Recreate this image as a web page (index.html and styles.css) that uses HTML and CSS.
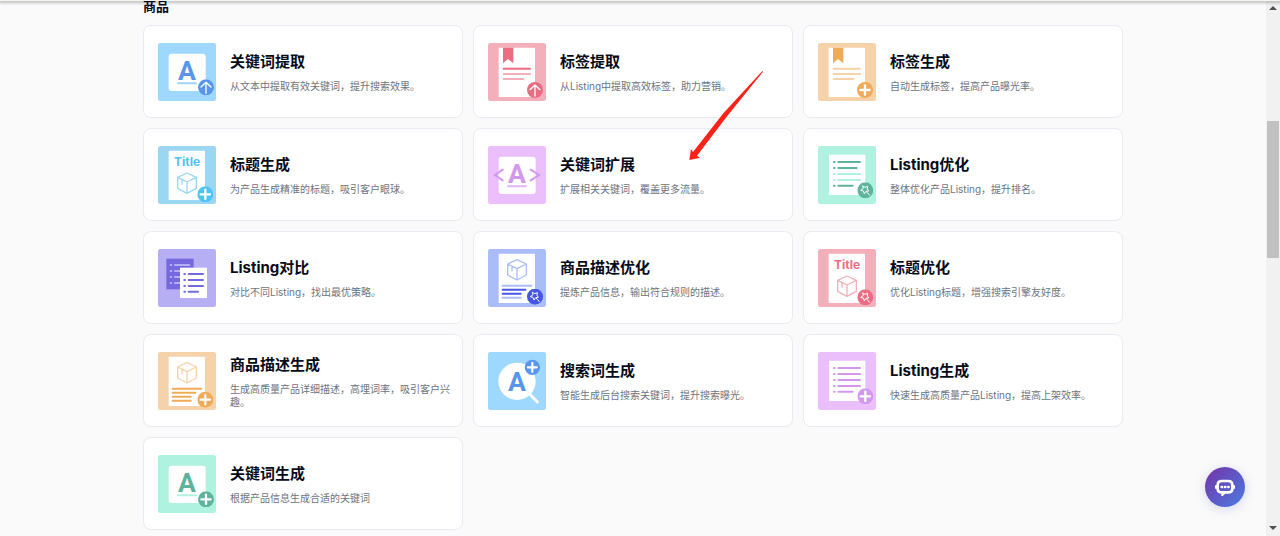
FILE: index.html
```html
<!DOCTYPE html>
<html lang="zh-CN">
<head>
<meta charset="utf-8">
<meta name="viewport" content="width=device-width, initial-scale=1">
<title>商品</title>
<link rel="stylesheet" href="styles.css">
</head>
<body>
<svg class="sprite" aria-hidden="true">
  <symbol id="tile" viewBox="24 21 174 174"><rect class="tile-bg" x="24" y="21" width="174" height="174" rx="7"/></symbol>
  <symbol id="box" viewBox="0 0 62 66">
    <path class="line" d="M31 2 59 15V48L31 63 3 48V15ZM3 15 31 29 59 15M31 29V63M16 22V37"/>
  </symbol>
  <symbol id="badge-plus" viewBox="0 0 48 48"><circle class="strong" cx="24" cy="24" r="24"/><path class="mark" stroke-width="7" d="M24 10V38M10 24H38"/></symbol>
  <symbol id="badge-up" viewBox="0 0 48 48"><circle class="strong" cx="24" cy="24" r="24"/><path class="mark" stroke-width="4" d="M24 42V9M9 23 24 9 39 23"/></symbol>
  <symbol id="badge-star" viewBox="0 0 48 48"><circle class="strong" cx="24" cy="24" r="24"/><path class="mark" stroke-width="3" d="M17 11 23 15 31 12 30 20 34 26 26 27 21 34 18 26 10 24 17 19ZM28 29 37 39"/></symbol>
</svg>

<header class="topbar"></header>

<div class="page">
<main class="content">
  <h2 class="heading">商品</h2>
  <div class="grid">

    <a class="card blue" href="#">
      <svg class="icon" viewBox="24 21 174 174" aria-hidden="true">
        <use href="#tile" x="24" y="21" width="174" height="174"/>
        <rect class="paper" x="56" y="53" width="111" height="112" rx="9"/>
        <text class="letter" x="111" y="132">A</text>
        <path class="rule light" d="M84 142H138"/>
        <use href="#badge-up" x="144" y="130" width="48" height="48"/>
      </svg>
      <div class="text"><h3 class="title">关键词提取</h3><p class="desc">从文本中提取有效关键词，提升搜索效果。</p></div>
    </a>

    <a class="card pink" href="#">
      <svg class="icon" viewBox="24 21 174 174" aria-hidden="true">
        <use href="#tile" x="24" y="21" width="174" height="174"/>
        <path class="paper" d="M56 35H165V183H56Z"/>
        <path class="strong" d="M69 35H100V82L84 69 69 82Z"/>
        <path class="rule bold" d="M71 98H150"/><path class="rule light" d="M71 114H150M71 129H130"/>
        <use href="#badge-up" x="141" y="138" width="48" height="48"/>
      </svg>
      <div class="text"><h3 class="title">标签提取</h3><p class="desc">从Listing中提取高效标签，助力营销。</p></div>
    </a>

    <a class="card orange" href="#">
      <svg class="icon" viewBox="24 21 174 174" aria-hidden="true">
        <use href="#tile" x="24" y="21" width="174" height="174"/>
        <path class="paper" d="M56 35H165V183H56Z"/>
        <path class="strong" d="M69 35H100V82L84 69 69 82Z"/>
        <path class="rule light" d="M71 98H150M71 114H150M71 129H130"/>
        <use href="#badge-plus" x="141" y="138" width="48" height="48"/>
      </svg>
      <div class="text"><h3 class="title">标签生成</h3><p class="desc">自动生成标签，提高产品曝光率。</p></div>
    </a>

    <a class="card sky" href="#">
      <svg class="icon" viewBox="24 21 174 174" aria-hidden="true">
        <use href="#tile" x="24" y="21" width="174" height="174"/>
        <path class="paper" d="M56 35H165V183H56Z"/>
        <text class="word" x="111" y="82">Title</text>
        <use href="#box" x="80" y="100" width="62" height="66"/>
        <use href="#badge-plus" x="142" y="142" width="48" height="48"/>
      </svg>
      <div class="text"><h3 class="title">标题生成</h3><p class="desc">为产品生成精准的标题，吸引客户眼球。</p></div>
    </a>

    <a class="card purple" href="#">
      <svg class="icon" viewBox="24 21 174 174" aria-hidden="true">
        <use href="#tile" x="24" y="21" width="174" height="174"/>
        <rect class="paper" x="56" y="53" width="111" height="112" rx="9"/>
        <text class="letter" x="111" y="132">A</text>
        <path class="rule light" d="M84 142H138"/>
        <path class="bracket" d="M68 92 45 108 68 124M152 92 177 108 152 124"/>
      </svg>
      <div class="text"><h3 class="title">关键词扩展</h3><p class="desc">扩展相关关键词，覆盖更多流量。</p></div>
    </a>

    <a class="card green" href="#">
      <svg class="icon" viewBox="24 21 174 174" aria-hidden="true">
        <use href="#tile" x="24" y="21" width="174" height="174"/>
        <path class="paper" d="M57 47H166V168H57Z"/>
        <path class="rule bold" d="M72 69H74M85 69H150M72 87H74M85 87H140M72 140H74M85 140H128"/>
        <path class="rule light" d="M72 105H74M85 105H150M72 123H74M85 123H150"/>
        <use href="#badge-star" x="142" y="130" width="48" height="48"/>
      </svg>
      <div class="text"><h3 class="title">Listing优化</h3><p class="desc">整体优化产品Listing，提升排名。</p></div>
    </a>

    <a class="card violet" href="#">
      <svg class="icon" viewBox="24 21 174 174" aria-hidden="true">
        <use href="#tile" x="24" y="21" width="174" height="174"/>
        <path class="strong" d="M49 50H131V142H49Z"/>
        <path class="rule light" d="M62 69H64M75 69H118M62 87H64M75 87H118M62 105H64M75 105H118M62 123H64M75 123H118"/>
        <path class="paper" d="M90 77H171V168H90Z"/>
        <path class="rule bold" d="M103 96H105M116 96H159M103 114H105M116 114H159M103 132H105M116 132H159M103 149H105M116 149H144"/>
      </svg>
      <div class="text"><h3 class="title">Listing对比</h3><p class="desc">对比不同Listing，找出最优策略。</p></div>
    </a>

    <a class="card indigo" href="#">
      <svg class="icon" viewBox="24 21 174 174" aria-hidden="true">
        <use href="#tile" x="24" y="21" width="174" height="174"/>
        <path class="paper" d="M56 35H165V183H56Z"/>
        <use href="#box" x="80" y="51" width="62" height="66"/>
        <path class="rule light" d="M68 131H154M68 167H122"/><path class="rule bold" d="M68 143H136M68 155H122"/>
        <use href="#badge-star" x="141" y="140" width="48" height="48"/>
      </svg>
      <div class="text"><h3 class="title">商品描述优化</h3><p class="desc">提炼产品信息，输出符合规则的描述。</p></div>
    </a>

    <a class="card pink" href="#">
      <svg class="icon" viewBox="24 21 174 174" aria-hidden="true">
        <use href="#tile" x="24" y="21" width="174" height="174"/>
        <path class="paper" d="M56 35H165V183H56Z"/>
        <text class="word" x="111" y="82">Title</text>
        <use href="#box" x="80" y="100" width="62" height="66"/>
        <use href="#badge-star" x="142" y="142" width="48" height="48"/>
      </svg>
      <div class="text"><h3 class="title">标题优化</h3><p class="desc">优化Listing标题，增强搜索引擎友好度。</p></div>
    </a>

    <a class="card orange" href="#">
      <svg class="icon" viewBox="24 21 174 174" aria-hidden="true">
        <use href="#tile" x="24" y="21" width="174" height="174"/>
        <path class="paper" d="M56 35H165V183H56Z"/>
        <use href="#box" x="80" y="51" width="62" height="66"/>
        <path class="rule bold" d="M68 131H154M68 143H136M68 155H122M68 167H122"/>
        <use href="#badge-plus" x="142" y="140" width="48" height="48"/>
      </svg>
      <div class="text"><h3 class="title">商品描述生成</h3><p class="desc">生成高质量产品详细描述，高埋词率，吸引客户兴趣。</p></div>
    </a>

    <a class="card blue" href="#">
      <svg class="icon" viewBox="24 21 174 174" aria-hidden="true">
        <use href="#tile" x="24" y="21" width="174" height="174"/>
        <circle class="paper" cx="111" cy="109" r="56"/>
        <path class="mark" stroke-width="9" d="M147 145 172 171"/>
        <text class="letter" x="111" y="138">A</text>
        <use href="#badge-plus" x="134" y="43" width="46" height="48"/>
      </svg>
      <div class="text"><h3 class="title">搜索词生成</h3><p class="desc">智能生成后台搜索关键词，提升搜索曝光。</p></div>
    </a>

    <a class="card purple" href="#">
      <svg class="icon" viewBox="24 21 174 174" aria-hidden="true">
        <use href="#tile" x="24" y="21" width="174" height="174"/>
        <path class="paper" d="M57 47H166V168H57Z"/>
        <path class="rule bold" d="M72 69H74M85 69H150M72 87H74M85 87H150M72 105H74M85 105H150M72 123H74M85 123H150M72 140H74M85 140H128"/>
        <use href="#badge-plus" x="142" y="130" width="48" height="48"/>
      </svg>
      <div class="text"><h3 class="title">Listing生成</h3><p class="desc">快速生成高质量产品Listing，提高上架效率。</p></div>
    </a>

    <a class="card green" href="#">
      <svg class="icon" viewBox="24 21 174 174" aria-hidden="true">
        <use href="#tile" x="24" y="21" width="174" height="174"/>
        <rect class="paper" x="56" y="53" width="111" height="112" rx="9"/>
        <text class="letter" x="111" y="132">A</text>
        <path class="rule light" d="M84 142H138"/>
        <use href="#badge-plus" x="144" y="130" width="48" height="48"/>
      </svg>
      <div class="text"><h3 class="title">关键词生成</h3><p class="desc">根据产品信息生成合适的关键词</p></div>
    </a>
  </div>

  <svg class="pointer" viewBox="0 0 270 330" aria-hidden="true">
    <path d="M28 300 33 267 39 276 130 160 247 33 249 35 140 170 51 287 60 293Z"/>
  </svg>
</main>

<div class="scrollbar" aria-hidden="true">
  <svg class="arrow" viewBox="0 0 14 14"><path d="M3 8 7 4 11 8Z"/></svg>
  <div class="track"><div class="thumb"></div></div>
  <svg class="arrow" viewBox="0 0 14 14"><path d="M3 6 7 10 11 6Z"/></svg>
</div>
</div>

<button class="chat" type="button" aria-label="客服">
  <svg class="chat-icon" viewBox="0 0 60 54" aria-hidden="true">
    <path class="chat-ears" d="M3 24V30M57 24V30"/>
    <path class="chat-bubble" d="M21 9H39Q52 9 52 21V32Q52 43 39 43H29L23 49V43H21Q8 43 8 32V21Q8 9 21 9Z"/>
    <path class="chat-dots" d="M20 27H21M30 27H31M40 27H41"/>
  </svg>
</button>
</body>
</html>
```
FILE: styles.css
```css
* { box-sizing: border-box; }

body {
  margin: 0;
  background: #fafafa;
  color: #060b18;
  font-family: Inter, "Noto Sans CJK SC", sans-serif;
}

.sprite { position: absolute; width: 0; height: 0; }

.topbar {
  position: fixed;
  top: 0;
  left: 0;
  right: 0;
  z-index: 2;
  height: 1px;
  background: #f3f6ee;
  box-shadow: 0 1px 3px 1px rgba(0, 0, 0, 0.25);
}

.page {
  display: flex;
  height: 100vh;
  overflow: hidden;
}

.content {
  position: relative;
  flex: 0 1 980px;
  margin: 0 auto;
}

.heading {
  margin: 0 0 13px;
  font-size: 13px;
  line-height: 12px;
  font-weight: 700;
}

.grid {
  display: grid;
  grid-template-columns: repeat(3, minmax(0, 1fr));
  gap: 10px;
}

.card {
  display: flex;
  align-items: center;
  gap: 14px;
  min-height: 93px;
  padding: 8px 10px 8px 14px;
  border: 1px solid #e9ebf3;
  border-radius: 8px;
  background: #fff;
  color: inherit;
  text-decoration: none;
}

.icon { flex: none; width: 58px; height: 58px; }
.text { min-width: 0; }

.title {
  margin: 0 0 6px;
  font-size: 15px;
  line-height: 24px;
  font-weight: 700;
}

.desc {
  margin: 0;
  color: #6d7480;
  font-size: 10px;
  line-height: 13px;
}

.blue { --bg: #9fd8ff; --light: #9fd3fa; --strong: #5896ed; }
.pink { --bg: #f3afba; --light: #f3afba; --strong: #ec6c84; }
.orange { --bg: #f6d2aa; --light: #f6d2aa; --strong: #f1aa55; }
.sky { --bg: #9bd6f2; --light: #9bd6f2; --strong: #4bc4f6; }
.purple { --bg: #eabffb; --light: #e4b4f8; --strong: #d398ee; }
.green { --bg: #aff2df; --light: #aff2df; --strong: #5db39c; }
.violet { --bg: #b7aff4; --light: #b7aff4; --strong: #7569df; }
.indigo { --bg: #abbdf9; --light: #abbdf9; --strong: #4455e8; }

.tile-bg { fill: var(--bg); }
.paper { fill: #fff; }
.strong { fill: var(--strong); }
.line { fill: none; stroke: var(--light); stroke-width: 4; stroke-linejoin: round; }
.mark { fill: none; stroke: #fff; stroke-linecap: round; stroke-linejoin: round; }
.rule { fill: none; stroke-width: 6; stroke-linecap: round; }
.rule.light { stroke: var(--light); }
.rule.bold { stroke: var(--strong); }
.bracket { fill: none; stroke: var(--strong); stroke-width: 6; stroke-linecap: round; }

.letter,
.word {
  fill: var(--strong);
  text-anchor: middle;
}

.letter {
  font-family: Roboto, sans-serif;
  font-size: 80px;
  font-weight: 700;
}

.word {
  font-family: Inter, sans-serif;
  font-size: 36px;
  font-weight: 700;
}

.pointer {
  position: absolute;
  top: 60px;
  left: 537px;
  width: 90px;
  height: 110px;
  fill: #fb2318;
  pointer-events: none;
}

.scrollbar {
  display: flex;
  flex-direction: column;
  flex: none;
  width: 14px;
  padding: 2px 0;
  background: #f1f1f1;
}

.arrow { width: 14px; height: 14px; fill: #505050; }
.track { flex: 1; padding: 105px 1px 0; }
.thumb { height: 137px; background: #c1c1c1; }

.chat {
  position: fixed;
  right: 35px;
  bottom: 29px;
  display: grid;
  place-items: center;
  width: 40px;
  height: 40px;
  padding: 0;
  border: 0;
  border-radius: 50%;
  background: linear-gradient(135deg, #7433a5, #4a7ce4);
  box-shadow: 0 2px 12px rgba(60, 80, 180, 0.2);
}

.chat-icon { width: 20px; height: 18px; }
.chat-icon path { fill: none; stroke: #fff; stroke-linecap: round; }
.chat-icon .chat-bubble { stroke-width: 8; }
.chat-icon .chat-ears { stroke-width: 6; }
.chat-icon .chat-dots { stroke-width: 8; }
```
